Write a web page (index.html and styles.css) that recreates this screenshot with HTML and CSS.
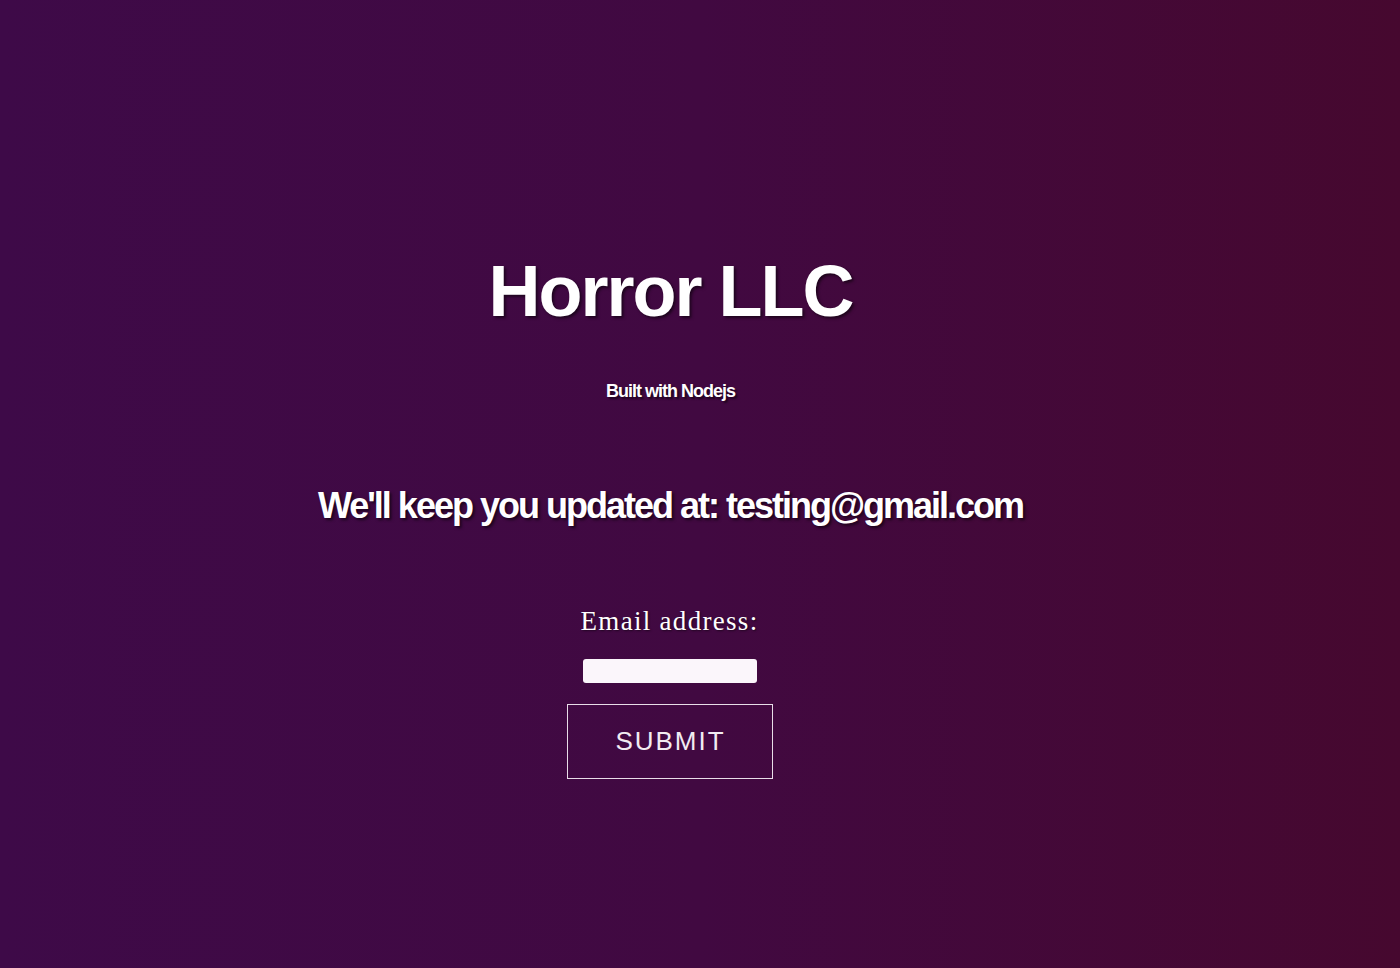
FILE: index.html
```html
<!DOCTYPE html>
<html lang="en">
<head>
<meta charset="utf-8">
<title>Horror LLC</title>
<link rel="stylesheet" href="styles.css">
</head>
<body>
<main class="page">
  <h1 class="title">Horror LLC</h1>
  <p class="subtitle">Built with Nodejs</p>
  <h2 class="notice">We'll keep you updated at: testing@gmail.com</h2>
  <form class="signup">
    <label class="label" for="email">Email address:</label>
    <input class="field" id="email" type="email">
    <button class="submit" type="button">SUBMIT</button>
  </form>
</main>
</body>
</html>
```

FILE: styles.css
```css
html, body {
  margin: 0;
  padding: 0;
}
body {
  min-height: 968px;
  background: linear-gradient(to right, #3e0a48 0%, #410941 50%, #46082f 100%);
  font-family: "Liberation Sans", Arial, sans-serif;
  color: #ffffff;
}
.page {
  display: flex;
  flex-direction: column;
  align-items: center;
  padding: 255px 59px 0 0;
  text-align: center;
}
.title {
  margin: 0;
  font-size: 72px;
  line-height: 1;
  font-weight: 700;
  letter-spacing: -2px;
  text-shadow: 2px 2px 3px rgba(0, 0, 0, 0.55);
}
.subtitle {
  margin: 55px 0 0;
  font-size: 18px;
  line-height: 1;
  font-weight: 700;
  letter-spacing: -1px;
  text-shadow: 2px 2px 2px rgba(0, 0, 0, 0.55);
}
.notice {
  margin: 88px 0 0;
  font-size: 36px;
  line-height: 1;
  font-weight: 700;
  letter-spacing: -2px;
  text-shadow: 2px 2px 3px rgba(0, 0, 0, 0.6);
}
.signup {
  display: flex;
  flex-direction: column;
  align-items: center;
  margin: 84px 2px 0 0;
}
.label {
  font-family: "Liberation Serif", "Times New Roman", serif;
  font-size: 27px;
  line-height: 1;
  letter-spacing: 1.3px;
  text-shadow: 1px 1px 2px rgba(0, 0, 0, 0.5);
}
.field {
  box-sizing: border-box;
  width: 174px;
  height: 24px;
  margin-top: 24px;
  border: none;
  border-radius: 3px;
  background: #fbf6fb;
  padding: 0;
}
.submit {
  box-sizing: border-box;
  width: 206px;
  height: 75px;
  margin-top: 21px;
  background: transparent;
  border: 1px solid #e8dde8;
  color: #f2ecf2;
  font-family: "Liberation Sans", Arial, sans-serif;
  font-size: 26px;
  letter-spacing: 2px;
  padding: 0 0 0 2px;
  cursor: pointer;
}
```
